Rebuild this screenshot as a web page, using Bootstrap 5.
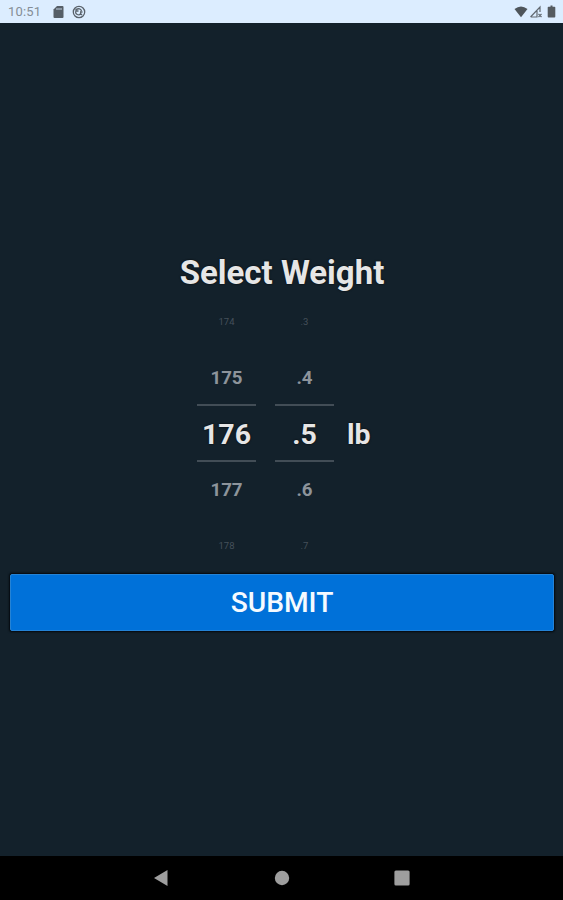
<!DOCTYPE html>
<html lang="en">
<head>
<meta charset="utf-8">
<meta name="viewport" content="width=device-width, initial-scale=1">
<title>Select Weight</title>
<link href="https://cdn.jsdelivr.net/npm/bootstrap@5.3.0/dist/css/bootstrap.min.css" rel="stylesheet">
<style>
body { font-family: Roboto, sans-serif; background: #13212b; color: #e6e6e6; }
.screen { height: 900px; }
.status-strip { height: 23px; background: #dcedff; color: #858d96; font-size: 13px; letter-spacing: .15px; padding: 1px 7px 0 8px; flex: none; }
.app-body { padding: 4px 9px 0 10px; }
.title-text { font-size: 33px; font-weight: 700; line-height: 40px; height: 41px; text-shadow: 0 0 2px #000; }
.picker { gap: 19px; margin-left: 187px; }
.wheel { width: 59px; height: 280px; font-weight: 700; }
.wheel > div { height: 56px; display: flex; align-items: center; justify-content: center; line-height: 1; }
.wheel > .far { font-size: 9.5px; font-weight: 400; color: #45505a; }
.wheel > .near { font-size: 18.7px; color: #8d949b; padding-top: 2px; }
.wheel > .chosen { font-size: 28.5px; border-top: 2px solid #424d56; border-bottom: 2px solid #424d56; height: 58px; margin: -2px 0 0; padding-top: 5px; text-shadow: 0 0 2px #000; }
.unit { font-size: 28.5px; font-weight: 700; line-height: 1; margin-left: -6px; padding-top: 4px; text-shadow: 0 0 2px #000; }
.submit-btn { height: 57px; --bs-btn-color: #f5faff; --bs-btn-bg: #0071d9; --bs-btn-border-color: #2583d5; --bs-btn-border-radius: 2px; --bs-btn-font-size: 28.2px; --bs-btn-font-weight: 500; --bs-btn-line-height: 1; border-width: 1.5px; box-shadow: 0 0 2px 1px #03080d; }
.submit-btn.btn { padding: 3px 0 0; }
.nav-strip { height: 44px; background: #000; flex: none; gap: 104.5px; }
svg { display: block; }
</style>
<script src="https://cdn.jsdelivr.net/npm/bootstrap@5.3.0/dist/js/bootstrap.bundle.min.js"></script>
</head>
<body>
<div class="screen d-flex flex-column overflow-hidden">
  <header class="status-strip d-flex align-items-center">
    <span>10:51</span>
    <svg class="ms-2 me-auto" width="46" height="16" viewBox="0 0 46 16">
      <path fill="#555e67" d="M8 2h5.500q1 0 1 1v10q0 1-1 1h-8q-1 0-1-1V5.500z"/>
      <path stroke="#dcedff" stroke-width=".8" d="M8 4v2M10 4v2M12 4v2"/>
      <g fill="none" stroke="#59626b" stroke-width="1.300"><circle cx="30" cy="8" r="5.700"/><path d="M27.500 5.500c2-1.500 4.500-.5 5 1.500M26.500 7.500c0 3 3 4 5 2.800M27 4.500v2.500h2.500M33 11l-2-2M31 8h2.500"/></g>
    </svg>
    <svg width="44" height="16" viewBox="0 0 44 16">
      <path fill="#4e555b" d="M2.500 5q6.500-5 13 0L9 13.200z"/>
      <path fill="none" stroke="#626a72" stroke-width="1.200" d="M18.500 13L28 3v5M18.500 13h6.500V7M26.500 10l3 3M29.500 10l-3 3"/>
      <path fill="#555b60" d="M38.500 1.500h2v1.300h2q.8 0 .8.800v9q0 .9-.8.900h-6q-.8 0-.8-.9V3.600q0-.8.800-.8h2z"/>
    </svg>
  </header>
  <main class="app-body flex-grow-1 d-flex flex-column justify-content-center">
    <h1 class="title-text text-center mb-0">Select Weight</h1>
    <div class="picker d-flex align-items-center">
      <div class="wheel">
        <div class="far">174</div><div class="near">175</div><div class="chosen">176</div><div class="near">177</div><div class="far">178</div>
      </div>
      <div class="wheel">
        <div class="far">.3</div><div class="near">.4</div><div class="chosen">.5</div><div class="near">.6</div><div class="far">.7</div>
      </div>
      <div class="unit">lb</div>
    </div>
    <button type="button" class="submit-btn btn btn-primary w-100">SUBMIT</button>
  </main>
  <nav class="nav-strip d-flex align-items-center justify-content-center">
    <svg width="16" height="16" viewBox="0 0 16 16"><path fill="#9e9e9e" d="M1 8L14.500 0v16z"/></svg>
    <svg width="16" height="16" viewBox="0 0 16 16"><circle cx="8" cy="8" r="7.200" fill="#9e9e9e"/></svg>
    <svg width="16" height="16" viewBox="0 0 16 16"><rect x=".4" y=".4" width="15.200" height="15.200" rx="1.500" fill="#9e9e9e"/></svg>
  </nav>
</div>
</body>
</html>
